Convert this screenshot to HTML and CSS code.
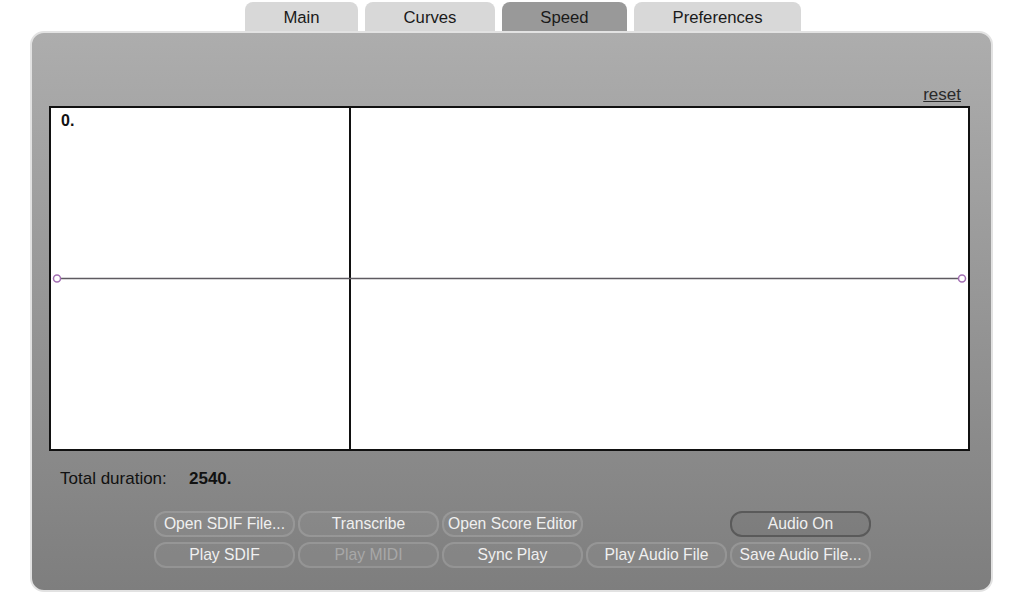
FILE: index.html
```html
<!DOCTYPE html>
<html>
<head>
<meta charset="utf-8">
<link rel="stylesheet" href="styles.css">
</head>
<body>
<div class="tabs">
  <div class="tab w-main">Main</div>
  <div class="tab w-curves">Curves</div>
  <div class="tab w-speed active">Speed</div>
  <div class="tab w-prefs">Preferences</div>
</div>
<div class="panel">
  <div class="reset-row"><span class="reset">reset</span></div>
  <div class="graph">
    <div class="pane left"><span class="val">0.</span></div>
    <div class="pane right"></div>
    <svg class="curve" width="921" height="345" viewBox="0 0 921 345">
      <line x1="8" y1="172.5" x2="913" y2="172.5" stroke="#5e5a60" stroke-width="1.5"/>
      <circle cx="8" cy="172.5" r="3.5" fill="#fff" stroke="#a36fb3" stroke-width="1.5"/>
      <circle cx="913" cy="172.5" r="3.5" fill="#fff" stroke="#a36fb3" stroke-width="1.5"/>
    </svg>
  </div>
  <div class="duration">
    <span class="label">Total duration:</span>
    <span class="num">2540.</span>
  </div>
  <div class="buttons">
    <div class="btn">Open SDIF File...</div>
    <div class="btn">Transcribe</div>
    <div class="btn">Open Score Editor</div>
    <div class="spacer"></div>
    <div class="btn on">Audio On</div>
    <div class="btn">Play SDIF</div>
    <div class="btn disabled">Play MIDI</div>
    <div class="btn">Sync Play</div>
    <div class="btn">Play Audio File</div>
    <div class="btn">Save Audio File...</div>
  </div>
</div>
</body>
</html>
```

FILE: styles.css
```css
* { box-sizing: border-box; }
body {
  margin: 0;
  background: #fff;
  font-family: "Liberation Sans", Arial, sans-serif;
  width: 1021px;
  height: 600px;
  overflow: hidden;
}
.tabs {
  display: flex;
  gap: 7px;
  padding-left: 245px;
  padding-top: 2px;
  height: 31px;
}
.tab {
  height: 29px;
  background: #d8d8d8;
  border-radius: 8px 8px 0 0;
  color: #1a1a1a;
  font-size: 16.7px;
  display: flex;
  justify-content: center;
  align-items: center;
  padding-top: 3px;
}
.tab.active { background: #999999; }
.w-main { width: 113px; }
.w-curves { width: 130px; }
.w-speed { width: 125px; }
.w-prefs { width: 167px; }
.panel {
  margin-left: 30px;
  width: 963px;
  height: 561px;
  border: 2px solid #e2e2e2;
  border-radius: 14px;
  background: linear-gradient(#adadad, #7e7e7e);
  padding: 0 21px 0 17px;
}
.reset-row {
  height: 73px;
  display: flex;
  justify-content: flex-end;
  align-items: flex-end;
  padding-right: 9px;
  padding-bottom: 1px;
}
.reset {
  font-size: 17px;
  color: #2a2a2a;
  text-decoration: underline;
}
.graph {
  position: relative;
  height: 345px;
  border: 2px solid #111;
  background: #fff;
  display: flex;
}
.pane.left {
  width: 300px;
  border-right: 2px solid #111;
  padding: 4px 0 0 10px;
}
.pane.right { flex: 1; }
.val {
  font-weight: bold;
  font-size: 16px;
  color: #111;
}
.curve {
  position: absolute;
  left: -2px;
  top: -2px;
}
.duration {
  height: 58px;
  display: flex;
  align-items: center;
  padding-left: 11px;
  padding-bottom: 2px;
  font-size: 17px;
  color: #111;
}
.duration .label { width: 129px; }
.duration .num { font-weight: bold; }
.buttons {
  display: grid;
  grid-template-columns: repeat(5, 141px);
  grid-auto-rows: 26px;
  column-gap: 3px;
  row-gap: 5px;
  margin-left: 105px;
  margin-top: 2px;
}
.btn {
  border: 2px solid rgba(255,255,255,0.13);
  background: rgba(255,255,255,0.04);
  border-radius: 12px;
  color: #f0f0f0;
  font-size: 15.7px;
  display: flex;
  justify-content: center;
  align-items: center;
  white-space: nowrap;
}
.btn.disabled { color: #a8a8a8; }
.btn.on {
  border-color: #5a5a5a;
  background: rgba(0,0,0,0.04);
}
```
